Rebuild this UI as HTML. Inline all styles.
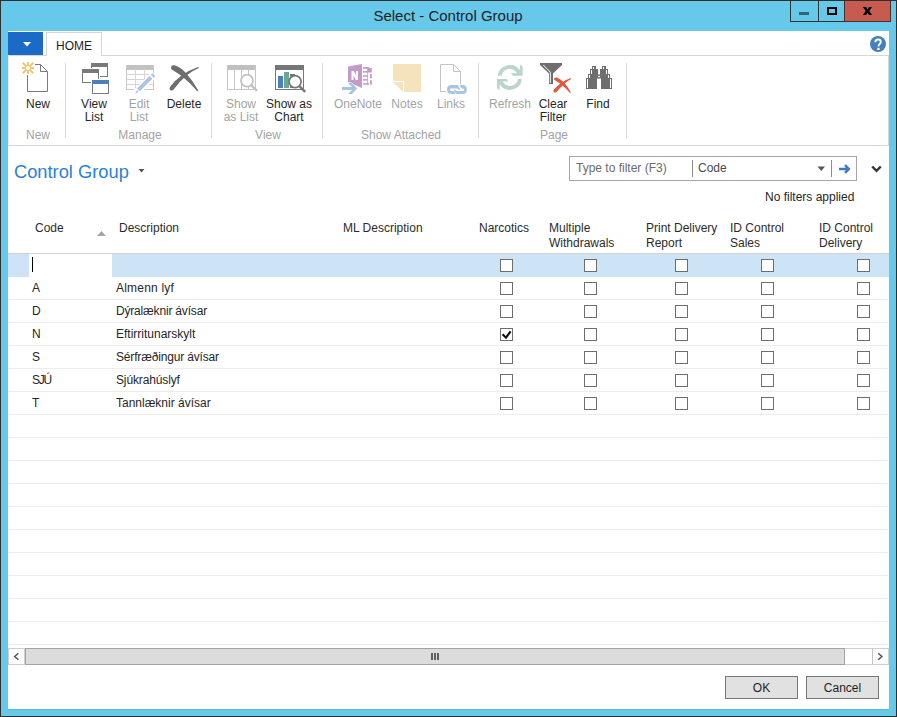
<!DOCTYPE html>
<html><head><meta charset="utf-8">
<style>
*{margin:0;padding:0;box-sizing:border-box}
html,body{width:897px;height:717px;overflow:hidden;background:#2f2f2f}
body{position:relative;font-family:"Liberation Sans",sans-serif;font-size:12px;color:#262626}
.a{position:absolute}
.t{position:absolute;white-space:nowrap;font-size:12px;line-height:13px}
.c{text-align:center}
.sep{position:absolute;width:1px;top:63px;height:75px;background:#dadada}
.dis{color:#a3a3a3}
.grp{position:absolute;white-space:nowrap;font-size:12px;line-height:12px;color:#a3a3a3;top:129px;text-align:center}
.hd{position:absolute;white-space:nowrap;font-size:12px;line-height:15px;color:#2b2b2b;top:221px}
.cb{position:absolute;width:13px;height:13px;border:1px solid #6e6e6e;background:#fff}
.rl{position:absolute;left:8px;width:880px;height:1px;background:#ececec}
.dt{position:absolute;white-space:nowrap;font-size:12px;line-height:12px;color:#262626}
</style></head><body>
<!-- window frame -->
<div class="a" style="left:1px;top:1px;width:895px;height:715px;background:#67c9ea"></div>
<div class="a" style="left:8px;top:31px;width:881px;height:678px;background:#fff"></div>
<div class="a" style="left:8px;top:709px;width:881px;height:1px;background:#5eb4d4"></div>

<!-- title -->
<div class="a" style="left:300px;top:8px;width:296px;text-align:center;font-size:15px;line-height:15px;color:#1e1e1e;white-space:nowrap">Select - Control Group</div>

<!-- window buttons -->
<div class="a" style="left:790px;top:1px;width:55px;height:21px;border:1px solid #333;border-top:none;background:#67c9ea"></div>
<div class="a" style="left:818px;top:1px;width:1px;height:21px;background:#333"></div>
<div class="a" style="left:844px;top:1px;width:47px;height:21px;background:#c75b50;border:1px solid #4a2e2e;border-top:none"></div>
<div class="a" style="left:799px;top:12px;width:10px;height:3px;background:#2d6478"></div>
<div class="a" style="left:827px;top:7px;width:10px;height:8px;border:2px solid #000"></div>
<svg class="a" style="left:860px;top:5px" width="15" height="12" viewBox="860 5 15 12"><path d="M862.9 7 H866.1 L867.5 9.4 L868.9 7 H872.1 L869.3 11 L872.1 15 H868.9 L867.5 12.6 L866.1 15 H862.9 L865.7 11 Z" fill="#000"/></svg>

<!-- ribbon tabs -->
<div class="a" style="left:8px;top:32px;width:35px;height:23px;background:#1b6bc6"></div>
<svg class="a" style="left:22px;top:41px" width="10" height="7"><path d="M1 1 L9 1 L5 5.5 Z" fill="#fff"/></svg>
<div class="a" style="left:8px;top:55px;width:881px;height:1px;background:#d6d6d6"></div>
<div class="a" style="left:46px;top:32px;width:56px;height:24px;border:1px solid #d6d6d6;border-bottom:none;background:#fff"></div>
<div class="t c" style="left:46px;top:40px;width:56px;line-height:12px;color:#1e1e1e">HOME</div>
<svg class="a" style="left:869px;top:35px" width="18" height="18" viewBox="0 0 18 18"><circle cx="9" cy="9" r="8" fill="#4680bc"/><path d="M6.3 7.2 C6.3 5.3 7.6 4.5 9.1 4.5 C10.7 4.5 11.8 5.5 11.8 6.9 C11.8 8.9 9.5 9 9.5 11.4" stroke="#fff" stroke-width="1.9" fill="none"/><rect x="8.3" y="12.8" width="2.3" height="2.2" fill="#fff"/></svg>

<!-- ribbon panel -->
<div class="a" style="left:8px;top:55px;width:881px;height:91px;border:1px solid #d6d6d6;border-left-color:#e9e9e9;border-top:none"></div>

<!-- separators -->
<div class="sep" style="left:65px"></div>
<div class="sep" style="left:211px"></div>
<div class="sep" style="left:322px"></div>
<div class="sep" style="left:478px"></div>
<div class="sep" style="left:626px"></div>

<!-- ribbon labels -->
<div class="t c" style="left:18px;top:98px;width:40px">New</div>
<div class="t c" style="left:74px;top:98px;width:40px">View<br>List</div>
<div class="t c dis" style="left:119px;top:98px;width:40px">Edit<br>List</div>
<div class="t c" style="left:162px;top:98px;width:44px">Delete</div>
<div class="t c dis" style="left:216px;top:98px;width:50px">Show<br>as List</div>
<div class="t c" style="left:263px;top:98px;width:52px">Show as<br>Chart</div>
<div class="t c dis" style="left:328px;top:98px;width:60px">OneNote</div>
<div class="t c dis" style="left:387px;top:98px;width:40px">Notes</div>
<div class="t c dis" style="left:431px;top:98px;width:40px">Links</div>
<div class="t c dis" style="left:485px;top:98px;width:50px">Refresh</div>
<div class="t c" style="left:528px;top:98px;width:50px">Clear<br>Filter</div>
<div class="t c" style="left:578px;top:98px;width:40px">Find</div>

<div class="grp" style="left:18px;width:40px">New</div>
<div class="grp" style="left:100px;width:80px">Manage</div>
<div class="grp" style="left:238px;width:60px">View</div>
<div class="grp" style="left:351px;width:100px">Show Attached</div>
<div class="grp" style="left:524px;width:60px">Page</div>

<!-- icon: New -->
<svg class="a" style="left:18px;top:58px" width="34" height="38" viewBox="18 58 34 38">
<path d="M27.5 75 V91.5 H47.5 V71.5 L40.5 64.5 H35 M40.5 64.5 V71.5 H47.5" stroke="#7a7a7a" stroke-width="1" fill="none"/>
<path d="M30.60 68.00 L34.00 68.00 M29.84 69.84 L33.30 73.30 M28.00 70.60 L28.00 74.00 M26.16 69.84 L22.70 73.30 M25.40 68.00 L22.00 68.00 M26.16 66.16 L22.70 62.70 M28.00 65.40 L28.00 62.00 M29.84 66.16 L33.30 62.70" stroke="#f0c872" stroke-width="2.1" fill="none"/>
<circle cx="28" cy="68" r="2.6" stroke="#f0c872" stroke-width="1.2" fill="#fff"/>
</svg>
<!-- icon: View List -->
<svg class="a" style="left:78px;top:60px" width="36" height="38" viewBox="78 60 36 38">
<g fill="#7a7a7a">
<rect x="91" y="63" width="17" height="4"/><rect x="107" y="63" width="1" height="14"/><rect x="100" y="76" width="8" height="1"/><rect x="91" y="63" width="1" height="5"/>
<rect x="82" y="69" width="17" height="4"/><rect x="82" y="69" width="1" height="14"/><rect x="82" y="82" width="9" height="1"/><rect x="98" y="69" width="1" height="10"/>
<rect x="92" y="80" width="1" height="14"/><rect x="108" y="80" width="1" height="14"/><rect x="92" y="93" width="17" height="1"/>
</g>
<rect x="92" y="80" width="17" height="4" fill="#4a80bd"/>
</svg>
<!-- icon: Edit List -->
<svg class="a" style="left:122px;top:60px" width="38" height="38" viewBox="122 60 38 38">
<g fill="#c8c8c8">
<rect x="126" y="65" width="28" height="5" fill="#c2c2c2"/>
<rect x="126" y="65" width="1" height="25"/><rect x="153" y="65" width="1" height="25"/><rect x="126" y="89" width="28" height="1"/>
<rect x="135" y="69" width="1" height="21" fill="#d4d4d4"/><rect x="144" y="69" width="1" height="21" fill="#d4d4d4"/>
<rect x="126" y="74" width="28" height="1" fill="#d4d4d4"/><rect x="126" y="79" width="28" height="1" fill="#d4d4d4"/><rect x="126" y="84" width="28" height="1" fill="#d4d4d4"/>
</g>
<path d="M135.8 93 L154.6 74.2" stroke="#fff" stroke-width="7"/>
<path d="M138.45 89.85 L150.95 77.45" stroke="#a9c5e2" stroke-width="3.9"/>
<path d="M152.3 76.3 L153.9 74.7" stroke="#a9c5e2" stroke-width="4.2"/>
<path d="M135.1 93.75 L137.1 90.1 L138.7 91.9 Z" fill="#a9c5e2"/>
</svg>
<!-- icon: Delete -->
<svg class="a" style="left:164px;top:60px" width="38" height="36" viewBox="164 60 38 36">
<g fill="#6e6e6e">
<path d="M171 67.5 Q171.3 64.6 174.5 65.3 Q181 67.5 186 73 Q193 81 198.5 90.8 L197 91 Q191 84 184.5 78.6 Q178 73 172.5 70 Q170.6 69 171 67.5 Z"/>
<path d="M171 90.6 Q168.6 89.6 170.3 86.6 Q174 81 181 76 Q189 70 198.6 66.8 L198.8 68.1 Q192 71 186.5 75.5 Q180 81 174.5 88.5 Q173 91 171 90.6 Z"/>
</g>
</svg>
<!-- icon: Show as List -->
<svg class="a" style="left:222px;top:60px" width="40" height="36" viewBox="222 60 40 36">
<g fill="#c6c6c6">
<rect x="227" y="65" width="29" height="5" fill="#c0c0c0"/>
<rect x="227" y="65" width="1" height="25"/><rect x="255" y="65" width="1" height="25"/><rect x="227" y="89" width="29" height="1"/>
<rect x="234" y="69" width="1" height="21"/><rect x="241" y="69" width="1" height="21"/><rect x="248" y="69" width="1" height="21"/>
</g>
<circle cx="247" cy="80.7" r="6" stroke="#c2c2c2" stroke-width="1.7" fill="#fff"/>
<path d="M251.3 85.2 L257 90.9" stroke="#c2c2c2" stroke-width="2.4"/>
</svg>
<!-- icon: Show as Chart -->
<svg class="a" style="left:270px;top:60px" width="40" height="36" viewBox="270 60 40 36">
<g fill="#777">
<rect x="275" y="65" width="29" height="5"/>
<rect x="275" y="65" width="1" height="25"/><rect x="303" y="65" width="1" height="25"/><rect x="275" y="89" width="29" height="1"/>
<rect x="290" y="74" width="5" height="14"/>
</g>
<rect x="278" y="76" width="5" height="12" fill="#4a7fbd"/>
<rect x="284" y="72" width="5" height="16" fill="#6aa78f"/>
<circle cx="295.1" cy="81.6" r="6" stroke="#777" stroke-width="1.7" fill="#fff"/>
<path d="M299.4 86.1 L305.2 91.9" stroke="#777" stroke-width="2.4"/>
</svg>
<!-- icon: OneNote -->
<svg class="a" style="left:338px;top:60px" width="38" height="38" viewBox="338 60 38 38">
<g fill="#c39bc6">
<path d="M348 66.5 L362 64 V88 L348 82 Z"/>
<rect x="363" y="67" width="6" height="1.7"/><rect x="363" y="71.1" width="4.5" height="1.5"/><rect x="363" y="75.2" width="4.5" height="1.5"/><rect x="363" y="79.1" width="4.5" height="1.5"/><rect x="363" y="83.2" width="6" height="1.5"/>
<rect x="367" y="67" width="1" height="17.5" opacity="0.75"/>
<rect x="367.5" y="68" width="4.3" height="4.5"/><rect x="370" y="74.1" width="1.8" height="4.3"/><rect x="370" y="80.2" width="1.8" height="4.4"/>
</g>
<path d="M351.5 80 V71 H353.8 L356 75.5 V71 H358 V80 H355.8 L353.5 75.3 V80 Z" fill="#fff"/>
<path d="M342 87 H352 L348 83 H352 L357 88.5 L352 94 H348 L352 90 H342 Z" fill="#a6c4e1" stroke="#fff" stroke-width="1"/>
<path d="M342 87 H352 L348 83 H352 L357 88.5 L352 94 H348 L352 90 H342 Z" fill="#a6c4e1"/>
</svg>
<!-- icon: Notes -->
<svg class="a" style="left:388px;top:60px" width="38" height="38" viewBox="388 60 38 38">
<path d="M393 64 H421 V92 H404 V81 H393 Z" fill="#f5e3bc"/>
<path d="M393 82 H403 V92 Z" fill="#f5e3bc"/>
</svg>
<!-- icon: Links -->
<svg class="a" style="left:434px;top:60px" width="38" height="38" viewBox="434 60 38 38">
<path d="M440.5 92 V64.5 H453.5 L460.5 71.5 V84 M453.5 64.5 V71.5 H460.5 M440.5 91.5 H446" stroke="#c4c4c4" stroke-width="1" fill="none"/>
<path d="M451.4 84.9 H457.7 L460.2 89.2 Q459.8 90 459 89.8 L457.4 88.4 H451.4 Q450 88.4 450 89.7 Q450 91 451.4 91 H454 L455.8 93.9 H451.4 Q447 93.9 447 89.4 Q447 84.9 451.4 84.9 Z" fill="#a9c5e2"/>
<path d="M459.5 84.9 H462.5 Q466.9 84.9 466.9 89.4 Q466.9 93.9 462.5 93.9 H456.2 L454 90 Q454.2 89.3 455 89.5 L456.5 91 H462.5 Q464 91 464 89.7 Q464 88.4 462.5 88.4 H461.4 Z" fill="#a9c5e2"/>
</svg>
<!-- icon: Refresh -->
<svg class="a" style="left:492px;top:60px" width="36" height="36" viewBox="492 60 36 36">
<g fill="#b9d5cd">
<path d="M497.7 75.8 A12.2 12.2 0 0 1 519.8 70.2 L520.2 64.4 L522.7 67 L522.7 75.7 L513 75.7 L510.9 73.2 L517 73.2 A8.4 8.4 0 0 0 501.45 75.8 Z"/>
<path d="M497.7 75.8 A12.2 12.2 0 0 1 519.8 70.2 L520.2 64.4 L522.7 67 L522.7 75.7 L513 75.7 L510.9 73.2 L517 73.2 A8.4 8.4 0 0 0 501.45 75.8 Z" transform="rotate(180 509.8 77.4)"/>
</g>
</svg>
<!-- icon: Clear Filter -->
<svg class="a" style="left:536px;top:60px" width="38" height="38" viewBox="536 60 38 38">
<path d="M540 63 H562 V65 L553 73.5 V84 H549 V73.5 L540 65 Z" fill="#6e6e6e"/>
<path d="M543.3 65 L550.3 72.2 V83" stroke="#fff" stroke-width="1" fill="none"/>
<g fill="#e0593c">
<path d="M554 79 Q554.3 76.8 557 77.6 Q562 80 565 83.5 Q568.5 88 571 92.6 L569.8 92.8 Q566 88.5 563 86 Q559 82.5 555.3 80.6 Q554 80 554 79 Z"/>
<path d="M554.5 92.6 Q552.5 91.8 554 89.6 Q557 86 561 83 Q566 79.5 571 78 L571.2 79 Q567 81 563.5 84.5 Q559.5 88.5 557 91.5 Q556 92.9 554.5 92.6 Z"/>
</g>
</svg>
<!-- icon: Find -->
<svg class="a" style="left:580px;top:60px" width="38" height="36" viewBox="580 60 38 36">
<path d="M586 89 V78 H588 V74 H590 V69 H592 V66 H596 V69 H598 V74.5 H600 V69 H602 V66 H606 V69 H608 V74 H610 V78 H612 V89 H601 V78.5 H597 V89 Z" fill="#6e6e6e"/>
<g fill="#fff">
<rect x="587" y="79" width="1" height="9"/><rect x="589" y="75" width="1" height="3"/><rect x="591" y="70" width="1" height="4"/><rect x="593" y="67" width="1" height="2"/>
<rect x="610" y="79" width="1" height="9"/><rect x="608" y="75" width="1" height="3"/><rect x="606" y="70" width="1" height="4"/><rect x="603" y="67" width="1" height="2"/>
<rect x="598" y="76" width="2" height="1"/>
</g>
</svg>


<!-- filter area -->
<div class="a" style="left:14px;top:163px;font-size:18.3px;line-height:18px;color:#2a82d4;white-space:nowrap">Control Group</div>
<svg class="a" style="left:138px;top:168px" width="8" height="6"><path d="M0.5 1 L6.5 1 L3.5 4.5 Z" fill="#555"/></svg>

<div class="a" style="left:569px;top:156px;width:288px;height:25px;border:1px solid #a6a6a6;background:#fff"></div>
<div class="t" style="left:576px;top:162px;line-height:12px;color:#6b6b6b">Type to filter (F3)</div>
<div class="a" style="left:692px;top:160px;width:1px;height:17px;background:#8c8c8c"></div>
<div class="t" style="left:698px;top:162px;line-height:12px;color:#4a4a4a">Code</div>
<svg class="a" style="left:817px;top:166px" width="9" height="6"><path d="M0.5 0.5 L8 0.5 L4.25 5 Z" fill="#555"/></svg>
<div class="a" style="left:831px;top:160px;width:1px;height:17px;background:#8c8c8c"></div>
<svg class="a" style="left:838px;top:164px" width="14" height="10" viewBox="0 0 14 10"><path d="M1 5 L10.5 5 M7 1.2 L10.8 5 L7 8.8" stroke="#3f7bbd" stroke-width="2.5" fill="none"/></svg>
<svg class="a" style="left:871px;top:165px" width="11" height="8" viewBox="0 0 11 8"><path d="M1.2 1.5 L5.5 5.8 L9.8 1.5" stroke="#333" stroke-width="2.4" fill="none"/></svg>
<div class="t" style="left:765px;top:191px;line-height:12px;color:#262626">No filters applied</div>

<!-- grid headers -->
<div class="hd" style="left:35px">Code</div>
<svg class="a" style="left:96px;top:230px" width="12" height="7"><path d="M1 6 L10 6 L5.5 1 Z" fill="#a6a6a6"/></svg>
<div class="hd" style="left:119px">Description</div>
<div class="hd" style="left:343px">ML Description</div>
<div class="hd" style="left:479px">Narcotics</div>
<div class="hd" style="left:549px">Multiple<br>Withdrawals</div>
<div class="hd" style="left:646px">Print Delivery<br>Report</div>
<div class="hd" style="left:730px">ID Control<br>Sales</div>
<div class="hd" style="left:819px">ID Control<br>Delivery</div>
<div class="a" style="left:8px;top:253px;width:881px;height:1px;background:#d2d2d2"></div>

<!-- selected row -->
<div class="a" style="left:8px;top:254px;width:881px;height:23px;background:#cde3f6"></div>
<div class="a" style="left:29px;top:254px;width:83px;height:23px;background:#fff"></div>
<div class="a" style="left:32px;top:257px;width:1px;height:15px;background:#000"></div>

<!-- row lines -->
<div class="rl" style="top:299px"></div>
<div class="rl" style="top:322px"></div>
<div class="rl" style="top:345px"></div>
<div class="rl" style="top:368px"></div>
<div class="rl" style="top:391px"></div>
<div class="rl" style="top:414px"></div>
<div class="rl" style="top:437px"></div>
<div class="rl" style="top:460px"></div>
<div class="rl" style="top:483px"></div>
<div class="rl" style="top:506px"></div>
<div class="rl" style="top:529px"></div>
<div class="rl" style="top:552px"></div>
<div class="rl" style="top:575px"></div>
<div class="rl" style="top:598px"></div>
<div class="rl" style="top:621px"></div>
<div class="rl" style="top:644px"></div>

<!-- data -->
<div class="dt" style="left:32px;top:282px">A</div>
<div class="dt" style="left:116px;top:282px;letter-spacing:0.2px">Almenn lyf</div>
<div class="dt" style="left:32px;top:305px">D</div>
<div class="dt" style="left:116px;top:305px;letter-spacing:-0.18px">Dýralæknir ávísar</div>
<div class="dt" style="left:32px;top:328px">N</div>
<div class="dt" style="left:116px;top:328px">Eftirritunarskylt</div>
<div class="dt" style="left:32px;top:351px">S</div>
<div class="dt" style="left:116px;top:351px;letter-spacing:-0.17px">Sérfræðingur ávísar</div>
<div class="dt" style="left:32px;top:374px;letter-spacing:-1.2px">SJÚ</div>
<div class="dt" style="left:116px;top:374px;letter-spacing:-0.13px">Sjúkrahúslyf</div>
<div class="dt" style="left:32px;top:397px">T</div>
<div class="dt" style="left:116px;top:397px">Tannlæknir ávísar</div>

<!-- checkboxes -->
<div class="cb" style="left:500px;top:259px"></div>
<div class="cb" style="left:584px;top:259px"></div>
<div class="cb" style="left:675px;top:259px"></div>
<div class="cb" style="left:761px;top:259px"></div>
<div class="cb" style="left:857px;top:259px"></div>
<div class="cb" style="left:500px;top:282px"></div>
<div class="cb" style="left:584px;top:282px"></div>
<div class="cb" style="left:675px;top:282px"></div>
<div class="cb" style="left:761px;top:282px"></div>
<div class="cb" style="left:857px;top:282px"></div>
<div class="cb" style="left:500px;top:305px"></div>
<div class="cb" style="left:584px;top:305px"></div>
<div class="cb" style="left:675px;top:305px"></div>
<div class="cb" style="left:761px;top:305px"></div>
<div class="cb" style="left:857px;top:305px"></div>
<div class="cb" style="left:500px;top:328px"></div>
<div class="cb" style="left:584px;top:328px"></div>
<div class="cb" style="left:675px;top:328px"></div>
<div class="cb" style="left:761px;top:328px"></div>
<div class="cb" style="left:857px;top:328px"></div>
<div class="cb" style="left:500px;top:351px"></div>
<div class="cb" style="left:584px;top:351px"></div>
<div class="cb" style="left:675px;top:351px"></div>
<div class="cb" style="left:761px;top:351px"></div>
<div class="cb" style="left:857px;top:351px"></div>
<div class="cb" style="left:500px;top:374px"></div>
<div class="cb" style="left:584px;top:374px"></div>
<div class="cb" style="left:675px;top:374px"></div>
<div class="cb" style="left:761px;top:374px"></div>
<div class="cb" style="left:857px;top:374px"></div>
<div class="cb" style="left:500px;top:397px"></div>
<div class="cb" style="left:584px;top:397px"></div>
<div class="cb" style="left:675px;top:397px"></div>
<div class="cb" style="left:761px;top:397px"></div>
<div class="cb" style="left:857px;top:397px"></div>
<svg class="a" style="left:500px;top:328px" width="13" height="13" viewBox="0 0 13 13"><path d="M2.5 6.3 L6 9.7 L10.6 3.4" stroke="#111" stroke-width="2.2" fill="none"/></svg>


<!-- scrollbar -->
<div class="a" style="left:8px;top:648px;width:881px;height:17px;background:#fff;border:1px solid #cfcfcf"></div>
<div class="a" style="left:25px;top:648px;width:820px;height:17px;background:#dcdcdc;border:1px solid #a3a3a3"></div>
<div class="a" style="left:24px;top:648px;width:1px;height:17px;background:#cfcfcf"></div>
<div class="a" style="left:872px;top:648px;width:1px;height:17px;background:#c4c4c4"></div>
<svg class="a" style="left:12px;top:650px" width="10" height="12" viewBox="12 650 10 12"><path d="M18.4 653.2 L14.7 656.5 L18.4 659.8" stroke="#555" stroke-width="1.5" fill="none"/></svg>
<svg class="a" style="left:874px;top:650px" width="10" height="12" viewBox="874 650 10 12"><path d="M878.2 653.2 L881.9 656.5 L878.2 659.8" stroke="#555" stroke-width="1.5" fill="none"/></svg>
<div class="a" style="left:431px;top:653px;width:2px;height:7px;background:#606060"></div>
<div class="a" style="left:434px;top:653px;width:2px;height:7px;background:#606060"></div>
<div class="a" style="left:437px;top:653px;width:2px;height:7px;background:#606060"></div>

<!-- buttons -->
<div class="a" style="left:725px;top:676px;width:73px;height:23px;background:#e1e1e1;border:1px solid #777"></div>
<div class="t c" style="left:725px;top:682px;width:73px;line-height:12px;color:#1e1e1e">OK</div>
<div class="a" style="left:806px;top:676px;width:73px;height:23px;background:#e1e1e1;border:1px solid #777"></div>
<div class="t c" style="left:806px;top:682px;width:73px;line-height:12px;color:#1e1e1e">Cancel</div>

</body></html>
